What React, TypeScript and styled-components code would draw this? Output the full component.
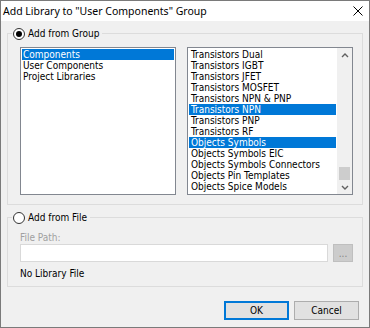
import React from 'react';
import styled, { createGlobalStyle } from 'styled-components';

const GlobalStyle = createGlobalStyle`
  html, body {
    margin: 0;
    padding: 0;
    background: #f0f0f0;
  }
  body {
    font-family: Tahoma, "DejaVu Sans Condensed", "Liberation Sans", sans-serif;
    font-size: 10px;
    color: #000;
  }
`;

const Window = styled.div`
  width: 370px;
  height: 328px;
  box-sizing: border-box;
  border: 1px solid #7a7a7a;
  background: #f0f0f0;
  display: flex;
  flex-direction: column;
`;

const TitleBar = styled.div`
  height: 20px;
  flex-shrink: 0;
  background: #fff;
  display: flex;
  align-items: center;
  justify-content: space-between;
  padding: 0 6px 0 2px;
  font-family: "Segoe UI", "Noto Sans", sans-serif;
  font-size: 10.5px;
`;

const Body = styled.div`
  padding: 6px 6px 0 6px;
  display: flex;
  flex-direction: column;
`;

const Group = styled.fieldset<{ $top?: number; $padTop: number; $padBottom: number }>`
  margin: ${({ $top }) => $top || 0}px 0 0 0;
  padding: ${({ $padTop, $padBottom }) => `${$padTop}px 9px ${$padBottom}px 12px`};
  border: 1px solid #dcdcdc;
  min-width: 0;
`;

const Legend = styled.legend`
  margin-left: -8px;
  padding: 0 3px 0 1px;
  height: 13px;
  display: flex;
  align-items: center;
  gap: 3px;
`;

const Radio = styled.span<{ $checked?: boolean }>`
  width: 12px;
  height: 12px;
  box-sizing: border-box;
  border: 1px solid #333;
  border-radius: 50%;
  background: #fff;
  display: flex;
  align-items: center;
  justify-content: center;

  &::after {
    content: '';
    width: 6px;
    height: 6px;
    border-radius: 50%;
    background: ${({ $checked }) => ($checked ? '#000' : 'transparent')};
  }
`;

const ListsRow = styled.div`
  display: flex;
  gap: 11px;
`;

const ListBox = styled.div<{ $width: number }>`
  width: ${({ $width }) => $width}px;
  height: 148px;
  box-sizing: border-box;
  border: 1px solid #828790;
  background: #fff;
  display: flex;
  overflow: hidden;
`;

const Items = styled.div`
  flex: 1;
  padding: 1px;
  min-width: 0;
`;

const Item = styled.div<{ $selected?: boolean; $indent: number }>`
  height: 11px;
  line-height: 11px;
  padding-left: ${({ $indent }) => $indent}px;
  white-space: nowrap;
  background: ${({ $selected }) => ($selected ? '#0078d7' : 'transparent')};
  color: ${({ $selected }) => ($selected ? '#fff' : '#000')};
`;

const ScrollBar = styled.div`
  width: 15px;
  background: #f0f0f0;
  display: flex;
  flex-direction: column;
`;

const ArrowBox = styled.div<{ $h: number }>`
  height: ${({ $h }) => $h}px;
  display: flex;
  align-items: center;
  justify-content: center;
`;

const Track = styled.div`
  flex: 1;
  display: flex;
  flex-direction: column;
  justify-content: flex-end;
  padding: 0 2px;
`;

const Thumb = styled.div`
  height: 13px;
  background: #cdcdcd;
`;

const DisabledLabel = styled.div`
  height: 11px;
  line-height: 11px;
  color: #a0a0a0;
`;

const InputRow = styled.div`
  margin-top: 1px;
  display: flex;
  gap: 5px;
`;

const TextInput = styled.div`
  flex: 1;
  height: 18px;
  box-sizing: border-box;
  border: 1px solid #d9d9d9;
  background: #fff;
`;

const BrowseButton = styled.div`
  width: 20px;
  height: 18px;
  box-sizing: border-box;
  border: 1px solid #bfbfbf;
  background: #cccccc;
  color: #838383;
  display: flex;
  align-items: center;
  justify-content: center;
  line-height: 1;
  padding-top: 2px;
`;

const StatusText = styled.div`
  margin-top: 6px;
  height: 11px;
  line-height: 11px;
`;

const ButtonRow = styled.div`
  margin-top: 14px;
  padding-right: 4px;
  display: flex;
  justify-content: flex-end;
  gap: 5px;
`;

const Button = styled.button<{ $default?: boolean }>`
  width: 65px;
  height: 19px;
  box-sizing: border-box;
  padding: 0;
  background: #e1e1e1;
  border: 1px solid ${({ $default }) => ($default ? '#0078d7' : '#adadad')};
  box-shadow: ${({ $default }) => ($default ? 'inset 0 0 0 1px #0078d7' : 'none')};
  font: inherit;
  color: #000;
`;

const Chevron = ({ up }: { up?: boolean }) => (
  <svg width="8" height="5" viewBox="0 0 8 5">
    <polyline
      points={up ? '1,4 4,1 7,4' : '1,1 4,4 7,1'}
      fill="none"
      stroke="#606060"
      strokeWidth="1.4"
    />
  </svg>
);

const CloseIcon = () => (
  <svg width="10" height="10" viewBox="0 0 10 10">
    <path d="M0.5 0.5 L9.5 9.5 M9.5 0.5 L0.5 9.5" stroke="#000" strokeWidth="1" />
  </svg>
);

const groups = ['Components', 'User Components', 'Project Libraries'];

const libraries = [
  'Transistors Dual',
  'Transistors IGBT',
  'Transistors JFET',
  'Transistors MOSFET',
  'Transistors NPN & PNP',
  'Transistors NPN',
  'Transistors PNP',
  'Transistors RF',
  'Objects Symbols',
  'Objects Symbols EIC',
  'Objects Symbols Connectors',
  'Objects Pin Templates',
  'Objects Spice Models',
];

const selectedLibraries = ['Transistors NPN', 'Objects Symbols'];

const App = () => {
  return (
    <>
      <GlobalStyle />
      <Window>
        <TitleBar>
          <span>Add Library to "User Components" Group</span>
          <CloseIcon />
        </TitleBar>
        <Body>
          <Group $padTop={7} $padBottom={9}>
            <Legend>
              <Radio $checked />
              Add from Group
            </Legend>
            <ListsRow>
              <ListBox $width={156}>
                <Items>
                  {groups.map((g, i) => (
                    <Item key={g} $indent={1} $selected={i === 0}>
                      {g}
                    </Item>
                  ))}
                </Items>
              </ListBox>
              <ListBox $width={166}>
                <Items>
                  {libraries.map((l) => (
                    <Item key={l} $indent={2} $selected={selectedLibraries.includes(l)}>
                      {l}
                    </Item>
                  ))}
                </Items>
                <ScrollBar>
                  <ArrowBox $h={15}>
                    <Chevron up />
                  </ArrowBox>
                  <Track>
                    <Thumb />
                  </Track>
                  <ArrowBox $h={14}>
                    <Chevron />
                  </ArrowBox>
                </ScrollBar>
              </ListBox>
            </ListsRow>
          </Group>
          <Group $top={6} $padTop={8} $padBottom={7}>
            <Legend>
              <Radio />
              Add from File
            </Legend>
            <DisabledLabel>File Path:</DisabledLabel>
            <InputRow>
              <TextInput />
              <BrowseButton>...</BrowseButton>
            </InputRow>
            <StatusText>No Library File</StatusText>
          </Group>
          <ButtonRow>
            <Button $default>OK</Button>
            <Button>Cancel</Button>
          </ButtonRow>
        </Body>
      </Window>
    </>
  );
};

export default App;
